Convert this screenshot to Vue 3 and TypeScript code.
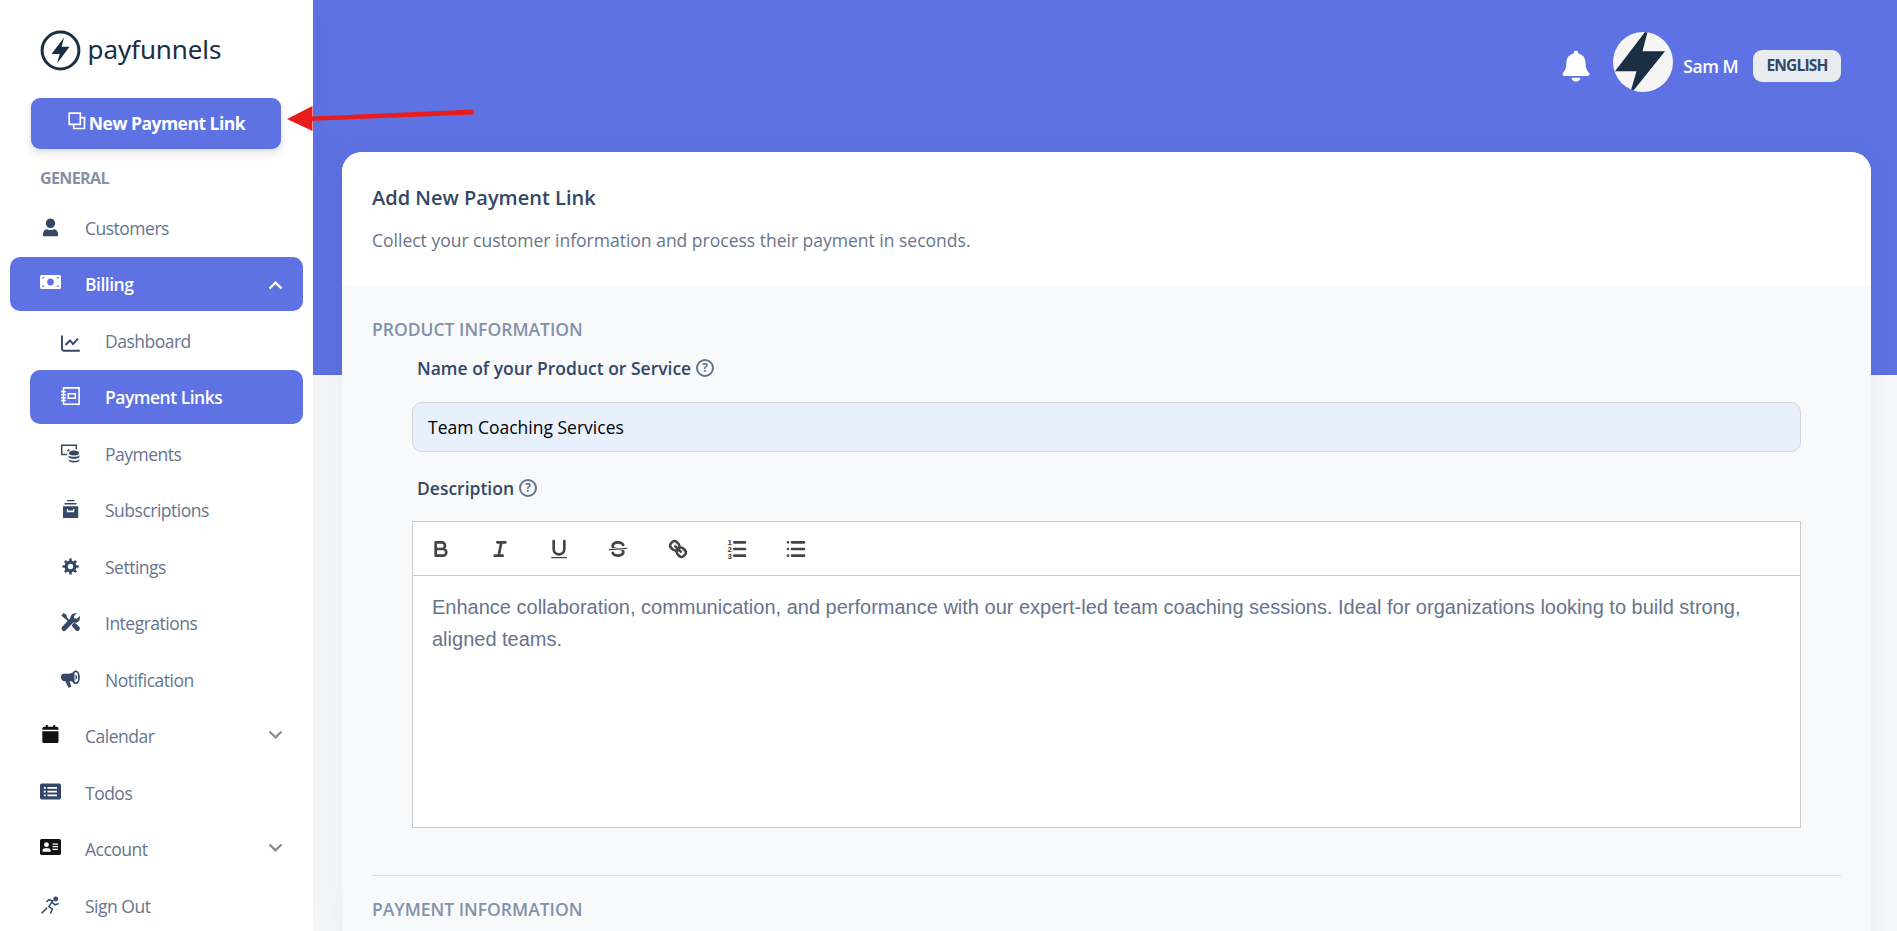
<template>
  <div class="page">
    <aside class="sidebar">
      <div class="logo">
        <svg width="41" height="41" viewBox="0 0 41 41">
          <circle cx="20.5" cy="20.5" r="18.4" fill="none" stroke="#1a2e44" stroke-width="3" />
          <path d="M24 7.5 11.5 24h8.2L17 33.500 29.500 16.800h-7.800z" fill="#1a2e44" />
        </svg>
        <span class="logo-text">payfunnels</span>
      </div>

      <button class="new-link-btn">
        <svg width="18" height="18" viewBox="0 0 18 18" fill="none" stroke="#fff" stroke-width="1.700">
          <path d="M1.200 1.200h11.100v11.100h-11.100zM12.300 5.700h4.200v10.800H5.700v-4.200" />
        </svg>
        <span>New Payment Link</span>
      </button>

      <div class="menu-title">GENERAL</div>
      <nav class="menu">
        <a
          v-for="item in menuItems"
          :key="item.label"
          class="menu-item"
          :class="{ active: item.active, sub: item.sub, black: item.black }"
        >
          <svg class="menu-icon" width="22" height="20" viewBox="0 0 22 20" v-html="icons[item.icon]"></svg>
          <span class="menu-label">{{ item.label }}</span>
          <svg v-if="item.arrow" class="menu-arrow" :class="item.arrow" width="15" height="10" viewBox="0 0 15 10">
            <path d="M1.500 1.500l6 5.800 6-5.800" fill="none" stroke="currentColor" stroke-width="2.300" />
          </svg>
        </a>
      </nav>
    </aside>

    <main class="main">
      <header class="topbar">
        <svg class="bell" width="28" height="32" viewBox="0 0 28 32" fill="#fff">
          <path d="M14 .5c1.300 0 2.200 1 2.200 2.300v.8c4.600 1 7.400 4.700 7.400 9.400 0 5.400 1.300 7.500 3.400 9.800 1.100 1.300.2 3.200-1.400 3.200H2.400C.8 26 0 24.100 1.100 22.800c2.100-2.300 3.300-4.400 3.300-9.800 0-4.700 2.800-8.400 7.400-9.400v-.8C11.800 1.500 12.700.5 14 .5z" />
          <path d="M9.600 27.800h8.800c0 2.200-2 3.900-4.400 3.900s-4.400-1.700-4.400-3.900z" />
        </svg>
        <div class="avatar">
          <svg width="60" height="60" viewBox="0 0 60 60">
            <path d="M32 0h2.500L29.500 19.300H52L20.500 58.500 18 58 23.500 39.300H2z" fill="#1a2e44" />
          </svg>
        </div>
        <span class="user-name">Sam M</span>
        <span class="lang">ENGLISH</span>
      </header>

      <section class="card">
        <div class="card-header">
          <h5>Add New Payment Link</h5>
          <p>Collect your customer information and process their payment in seconds.</p>
        </div>
        <div class="card-body">
          <h6>PRODUCT INFORMATION</h6>
          <div class="fields">
            <label>Name of your Product or Service <i class="help">?</i></label>
            <input v-model="productName" class="form-control" type="text" />
            <label>Description <i class="help">?</i></label>
            <div class="editor">
              <div class="toolbar">
                <button v-for="tool in tools" :key="tool.name" :title="tool.name">
                  <svg width="24" height="24" viewBox="0 0 18 18" v-html="tool.svg"></svg>
                </button>
              </div>
              <div class="editor-content">{{ description }}</div>
            </div>
          </div>
          <hr />
          <h6>PAYMENT INFORMATION</h6>
        </div>
      </section>
    </main>

    <svg class="arrow" width="190" height="28" viewBox="0 0 190 28" fill="#e81c1c">
      <path d="M0 14 25.500 1v10.500L186.500 4.500v5L25.500 15.700V26z" />
    </svg>
  </div>
</template>

<script setup lang="ts">
import { ref } from 'vue'

interface MenuItem {
  label: string
  icon: string
  sub?: boolean
  active?: boolean
  black?: boolean
  arrow?: 'up' | 'down'
}

const productName = ref('Team Coaching Services')
const description = ref(
  'Enhance collaboration, communication, and performance with our expert-led team coaching sessions. Ideal for organizations looking to build strong, aligned teams.'
)

const menuItems: MenuItem[] = [
  { label: 'Customers', icon: 'user' },
  { label: 'Billing', icon: 'cash', active: true, arrow: 'up' },
  { label: 'Dashboard', icon: 'chart', sub: true },
  { label: 'Payment Links', icon: 'book', sub: true, active: true },
  { label: 'Payments', icon: 'coins', sub: true },
  { label: 'Subscriptions', icon: 'archive', sub: true },
  { label: 'Settings', icon: 'gear', sub: true },
  { label: 'Integrations', icon: 'tools', sub: true },
  { label: 'Notification', icon: 'horn', sub: true },
  { label: 'Calendar', icon: 'calendar', black: true, arrow: 'down' },
  { label: 'Todos', icon: 'list' },
  { label: 'Account', icon: 'card', black: true, arrow: 'down' },
  { label: 'Sign Out', icon: 'run' }
]

const icons: Record<string, string> = {
  user: '<ellipse cx="10.500" cy="5.300" rx="4.600" ry="4.900"/><path d="M3 18.300v-2.300c0-3 2-4.800 4-4.800 2 1.200 5 1.200 7 0 2 0 4 1.800 4 4.800v2.300z"/>',
  cash: '<path fill-rule="evenodd" d="M1.500 1h18Q21 1 21 2.500v11Q21 15 19.500 15h-18Q0 15 0 13.500v-11Q0 1 1.500 1zM10.500 4.400a3.300 3.600 0 1 0 0 7.200 3.300 3.600 0 1 0 0-7.200zM2.500 3v2.200L4.800 3zm16 0h-2.300l2.300 2.200zM2.500 13h2.300l-2.300-2.200zm16 0v-2.200L16.200 13z"/>',
  chart: '<path d="M2 4.500v13Q2 19.700 4 19.700h15.800M5.500 14l4.500-4.500 3 3.500 5-5.300" fill="none" stroke="currentColor" stroke-width="1.900"/>',
  book: '<path d="M3.500.9h15.600v16.300H3.500zM8.300 6.700h7v4.600h-7zM1 4.500h5M1 7.600h5M1 10.700h5M1 13.500h5" fill="none" stroke="currentColor" stroke-width="1.600"/>',
  coins: '<path d="M7 10.500H1.700V1.300h14.600v4" fill="none" stroke="currentColor" stroke-width="1.500"/><path d="M7 6.300l2-1.500.8 1.500-2 1.500z"/><ellipse cx="14" cy="9" rx="5" ry="2.500"/><path d="M8.600 11.300c1 2 9.800 2 10.800 0v1.600c-.6 2.400-10.200 2.400-10.800 0zM8.600 15.300c1 2 9.800 2 10.800 0v1.200c-.6 2.600-10.200 2.600-10.800 0z"/>',
  archive: '<path fill-rule="evenodd" d="M7 0h7.500v1.300H7zM4.500 3h12v1.500h-12zM3 6.300h15.200V18H3zM6.800 9v3.200h7.500V9h-1.300v1.600H8.100V9z"/>',
  gear: '<circle cx="10.500" cy="9.500" r="4.300" fill="none" stroke="currentColor" stroke-width="3.200"/><path d="M10.500 1.500v3M10.500 14.500v3M2.500 9.500h3M15.500 9.500h3M4.900 3.900l2 2M14.100 13.100l2 2M4.900 15.100l2-2M14.100 5.900l2-2" stroke="currentColor" stroke-width="2.600"/>',
  tools: '<path d="M4 15.500 12.200 7" stroke="currentColor" stroke-width="5" stroke-linecap="round"/><path d="M4.500 3.500l7 7" stroke="currentColor" stroke-width="1.800"/><path d="M14.500 12.500l3 3" stroke="currentColor" stroke-width="4.800" stroke-linecap="round"/><path d="M1.300 2.500 3.700 0l3 2.300.3 2.700-2.500.3zM16.800.4c-4-1-7 2.200-6.300 5.600l3.300 3.700c4 .8 7.200-2.700 5.800-6.700l-2.800 2.800-2.500-.4-.4-2.400z"/>',
  horn: '<path d="M1 6.500Q1 4 3.500 3.800H8C11 3.800 13 2.700 14.500 1v12.500c-1.800-1.500-3-2.300-5-2.500l1.800 5.800-2.800 1-3.200-6.600C2.500 11 1 10 1 7.500z"/><ellipse cx="15.800" cy="7.300" rx="3.200" ry="6" fill="none" stroke="currentColor" stroke-width="1.700"/><path d="M15.500 4.500c2 1 2 4.500 0 5.500z"/>',
  calendar: '<path d="M5.800-1h2v1.700h5.400V-1h2v1.700h1.300q2 0 2 1.800V3.700H2.300V2.500Q2.300.7 4.300.7h1.500zM2.300 5.300h16.200v10.200q0 1.600-1.600 1.600h-13q-1.600 0-1.600-1.600z"/>',
  list: '<path fill-rule="evenodd" d="M1.800.6h17.400Q21 .6 21 2.300v12.500q0 1.700-1.800 1.700H1.800Q0 16.500 0 14.800V2.300Q0 .6 1.800.6zM3.800 4v1.700h2V4zm3.600 0v1.700H17V4zM3.800 7.700v1.700h2V7.700zm3.600 0v1.700H17V7.700zM3.800 11.500v1.700h2v-1.700zm3.600 0v1.700H17v-1.700z"/>',
  card: '<rect y="0" width="21" height="16" rx="1.700"/><g fill="#fff"><circle cx="6.500" cy="5.700" r="2.400"/><path d="M2.500 12.800v-1.300q0-2.300 2.300-2.300h3.500q2.300 0 2.300 2.300v1.300zM12.500 4.500H18v1.200h-5.500zM12.500 7.100H18v1.200h-5.500zM12.500 9.700H18v1.200h-5.500z"/></g>',
  run: '<circle cx="15.700" cy="2.900" r="2.400"/><path d="M6.500 6l2.300-2.300 4 1.300-4 5.500 3.500 2.500-1.800 4.500M12.300 6.500l2.700 2.300 3.700-1.200M7 11.500 5.800 13.300 1.600 17.300" fill="none" stroke="currentColor" stroke-width="1.500"/>'
}

// toolbar of the rich text editor
const stroke = 'fill="none" stroke="#444" stroke-width="2" stroke-linecap="round" stroke-linejoin="round"'
const tools = [
  {
    name: 'Bold',
    svg: `<path ${stroke} d="M5,4H9.500A2.500,2.500,0,0,1,12,6.500v0A2.500,2.500,0,0,1,9.500,9H5ZM5,9h5.500A2.500,2.500,0,0,1,13,11.500v0A2.500,2.500,0,0,1,10.500,14H5Z"/>`
  },
  { name: 'Italic', svg: `<path ${stroke} d="M7 4h6M5 14h6M8 14 10 4"/>` },
  {
    name: 'Underline',
    svg: `<path ${stroke} d="M5,3V9a4,4,0,0,0,8,0V3"/><rect fill="#444" height="1" rx="0.500" width="12" x="3" y="15"/>`
  },
  {
    name: 'Strike',
    svg: '<path d="M15.500 8.500l-13 1" stroke="#444" stroke-linecap="round"/><path fill="#444" d="M9.007,8C6.542,7.791,6,7.519,6,6.500,6,5.792,7.283,5,9,5c1.571,0,2.765.679,2.969,1.309a1,1,0,0,0,1.900-.617C13.356,4.106,11.354,3,9,3,6.200,3,4,4.538,4,6.500a3.200,3.200,0,0,0,.5,1.843ZM8.984,10C11.457,10.208,12,10.479,12,11.500c0,.708-1.283,1.500-3,1.500-1.571,0-2.765-.679-2.969-1.309a1,1,0,1,0-1.900.617C4.644,13.894,6.646,15,9,15c2.800,0,5-1.538,5-3.500a3.200,3.200,0,0,0-.5-1.843Z"/>'
  },
  {
    name: 'Link',
    svg: `<path ${stroke} d="M7 7l4 4M8.900,4.577a3.476,3.476,0,0,1,.36,4.679A3.476,3.476,0,0,1,4.577,8.900C3.185,7.500,2.035,6.400,4.217,4.217S7.500,3.185,8.900,4.577ZM13.423,9.100a3.476,3.476,0,0,0-4.679-.36,3.476,3.476,0,0,0,.36,4.679c1.392,1.392,2.500,2.542,4.679.36S14.815,10.500,13.423,9.100Z"/>`
  },
  {
    name: 'Ordered list',
    svg: `<path ${stroke} d="M7 4h8M7 9h8M7 14h8"/><g fill="#444" font-family="Liberation Sans, sans-serif" font-weight="bold" font-size="6"><text x="1.800" y="6">1</text><text x="1.800" y="11.200">2</text><text x="1.800" y="16.400">3</text></g>`
  },
  { name: 'Bullet list', svg: `<path ${stroke} d="M6 4h9M6 9h9M6 14h9M3 4h0M3 9h0M3 14h0"/>` }
]
</script>

<style>
body {
  margin: 0;
  overflow: hidden;
}
</style>

<style scoped>
.page {
  position: relative;
  display: flex;
  height: 931px;
  overflow: hidden;
  background: #f8f9fa;
  font-family: 'Open Sans', sans-serif;
  font-size: 17.5px;
  color: #67748e;
}

* {
  box-sizing: border-box;
}

.sidebar {
  position: relative;
  z-index: 1;
  flex: none;
  width: 313px;
  background: #fff;
  box-shadow: 0 0 40px rgba(0, 0, 0, 0.04);
}

.logo {
  display: flex;
  align-items: center;
  gap: 7px;
  height: 41px;
  margin: 30px 0 0 39.500px;
}

.logo-text {
  color: #1a2e44;
  font-family: 'Noto Sans', sans-serif;
  font-size: 26px;
  line-height: 36px;
  letter-spacing: -0.1px;
  margin-top: -4px;
}

.new-link-btn {
  display: flex;
  align-items: center;
  justify-content: center;
  gap: 3px;
  width: 250px;
  height: 51px;
  margin: 27px 0 0 31px;
  padding: 0 0 2px 1px;
  border: none;
  border-radius: 9px;
  background: #5e72e4;
  box-shadow: 0 5px 9px rgba(50, 50, 93, 0.12), 0 1px 4px rgba(0, 0, 0, 0.06);
  color: #fff;
  font-family: inherit;
  font-size: 17.5px;
  font-weight: 700;
  letter-spacing: -0.5px;
}

.new-link-btn svg {
  margin-top: -4px;
}

.menu-title {
  margin: 17px 0 0 40px;
  height: 24px;
  line-height: 24px;
  font-size: 16px;
  font-weight: 700;
  letter-spacing: -0.6px;
  color: #8591a5;
}

.menu {
  display: flex;
  flex-direction: column;
  gap: 2.500px;
  margin-top: 10.500px;
}

.menu-item {
  display: flex;
  flex: none;
  align-items: center;
  height: 54px;
  margin-left: 10px;
  width: 293px;
  padding: 0 20px 0 30px;
  border-radius: 10px;
  letter-spacing: -0.5px;
}

.menu-item.sub {
  margin-left: 30px;
  width: 273px;
}

.menu-icon {
  flex: none;
  overflow: visible;
  color: #344767;
  fill: currentColor;
}

.menu-label {
  flex: 1;
  margin-left: 23px;
}

.black .menu-icon {
  color: #111;
}

.active {
  background: #5e72e4;
  color: #fff;
  font-weight: 600;
}

.active .menu-icon {
  color: #fff;
}

.menu-arrow {
  color: #8c8c8c;
  margin-top: -2px;
}

.menu-arrow.up {
  color: #fff;
  transform: rotate(180deg);
  margin-top: 2px;
}

.main {
  flex: 1;
  padding: 0 26px 0 29px;
  background: linear-gradient(#5e72e4 0 375px, #f8f9fa 375px);
}

.topbar {
  display: flex;
  align-items: center;
  height: 152px;
  padding: 0 30px 20px 0;
  justify-content: flex-end;
}

.bell {
  margin-right: 23px;
}

.avatar {
  width: 60px;
  height: 60px;
  margin: -8px 10px 0 0;
  border-radius: 50%;
  overflow: hidden;
  background: #f5f5f5;
}

.avatar svg {
  display: block;
}

.user-name {
  margin-right: 15px;
  color: #fff;
  font-weight: 600;
  letter-spacing: -0.5px;
}

.lang {
  width: 88px;
  height: 32px;
  border-radius: 9px;
  background: #e9ecef;
  color: #344767;
  font-size: 15.5px;
  font-weight: 700;
  letter-spacing: -0.8px;
  line-height: 31px;
  text-align: center;
}

.card {
  height: 900px;
  border-radius: 20px;
  overflow: hidden;
  background: #f8f9fa;
  box-shadow: 0 0 36px rgba(0, 0, 0, 0.07);
}

.card-header {
  height: 134px;
  padding: 30px;
  background: #fff;
}

.card-header h5 {
  margin: 0;
  color: #344767;
  font-size: 20px;
  font-weight: 600;
  line-height: 32px;
}

.card-header p {
  margin: 12px 0 0;
  line-height: 28px;
}

.card-body {
  padding: 29px 30px;
}

h6 {
  margin: 0;
  color: #8392ab;
  font-size: 17.5px;
  font-weight: 600;
  line-height: 28px;
}

.fields {
  padding: 1px 40px 0;
}

label {
  display: flex;
  align-items: center;
  gap: 5px;
  height: 28px;
  margin: 10px 0 20px 5px;
  color: #344767;
  font-weight: 600;
}

.help {
  width: 18px;
  height: 18px;
  border: 2px solid #67748e;
  border-radius: 50%;
  color: #67748e;
  font-size: 12px;
  font-style: normal;
  font-weight: 700;
  line-height: 14px;
  text-align: center;
}

.form-control {
  display: block;
  width: 100%;
  height: 50px;
  padding: 0 15px;
  border: 1px solid #d2d6da;
  border-radius: 10px;
  outline: none;
  background: #e8f0fe;
  color: #000;
  font-family: inherit;
  font-size: 17.5px;
}

.form-control + label {
  margin-top: 22px;
  margin-bottom: 19px;
}

.editor {
  height: 307px;
  border: 1px solid #ccc;
  background: #fff;
}

.toolbar {
  display: flex;
  gap: 35.300px;
  height: 54px;
  padding: 1px 15.500px 0;
  border-bottom: 1px solid #ccc;
}

.toolbar button {
  display: flex;
  align-items: center;
  padding: 0;
  border: none;
  background: none;
}

.editor-content {
  padding: 15px 19px;
  font-family: 'Liberation Sans', Arial, sans-serif;
  font-size: 20px;
  line-height: 32px;
}

hr {
  height: 1px;
  margin: 47px 0 19px;
  border: none;
  background: #dcdee1;
}

.arrow {
  position: absolute;
  z-index: 2;
  left: 287px;
  top: 105px;
}
</style>
